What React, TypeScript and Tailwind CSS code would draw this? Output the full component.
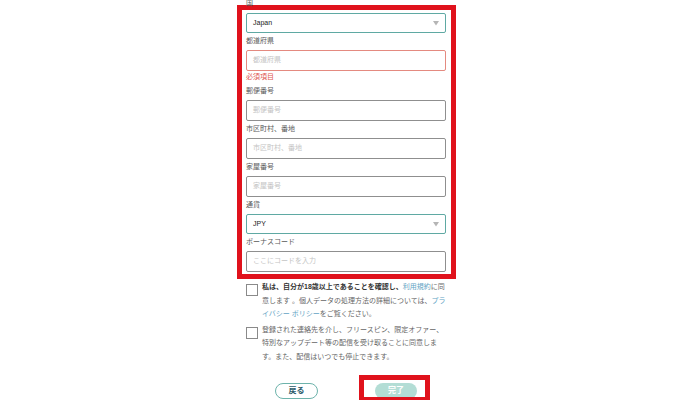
import React from "react";

const font = { fontFamily: '"Liberation Sans", "Noto Sans CJK JP", sans-serif' };

function Label({ children }: { children: React.ReactNode }) {
  return <div className="pt-[2px] pb-[3px] text-[7px] leading-[12px] text-[#5a5a5a]">{children}</div>;
}

function Arrow() {
  return (
    <svg width="6" height="5" viewBox="0 0 6 5" className="ml-auto mr-[6px]">
      <polygon points="0,0 6,0 3,4.5" fill="#b5b5b5" />
    </svg>
  );
}

function Select({ value }: { value: string }) {
  return (
    <div className="flex h-[20px] items-center rounded-[2px] border border-[#5fa9a3] bg-white pl-[6px] text-[7px] text-[#222]">
      <span>{value}</span>
      <Arrow />
    </div>
  );
}

function Input({ placeholder, error }: { placeholder: string; error?: boolean }) {
  return (
    <div
      className={`flex h-[21px] items-center rounded-[2px] border bg-white pl-[6px] text-[7px] text-[#c4c4c4] ${
        error ? "border-[#e48a80]" : "border-[#8f8f8f]"
      }`}
    >
      {placeholder}
    </div>
  );
}

function Checkbox({ children }: { children: React.ReactNode }) {
  return (
    <div className="flex">
      <div className="mt-[4px] h-[12px] w-[12px] shrink-0 border border-[#8a8a8a] bg-white" />
      <div className="ml-[4px] whitespace-nowrap text-[7px] leading-[13.5px] text-[#666]">{children}</div>
    </div>
  );
}

export default function App() {
  const link = "text-[#62a3c4]";
  return (
    <div className="h-[400px] w-[700px] overflow-hidden bg-white" style={font}>
      <div className="ml-[237px] w-[219px]">
        <div className="mt-[-3px] h-[8px] pl-[9px] text-[7px] leading-[12px] text-[#555]">国</div>
        <div className="border-[5px] border-[#e0121c] pb-[2px] pl-[4px] pr-[5px] pt-[3px]">
          <Select value="Japan" />
          <Label>都道府県</Label>
          <Input placeholder="都道府県" error />
          <div className="text-[7px] leading-[12px] text-[#e0554f]">必須項目</div>
          <Label>郵便番号</Label>
          <Input placeholder="郵便番号" />
          <Label>市区町村、番地</Label>
          <Input placeholder="市区町村、番地" />
          <Label>家屋番号</Label>
          <Input placeholder="家屋番号" />
          <Label>通貨</Label>
          <Select value="JPY" />
          <Label>ボーナスコード</Label>
          <Input placeholder="ここにコードを入力" />
        </div>
        <div className="pl-[9px] pr-[10px] pt-[1px]">
          <Checkbox>
            <span className="font-bold text-[#333]">私は、自分が18歳以上であることを確認し、</span>
            <span className={link}>利用規約</span>に同
            <br />
            意します 。個人データの処理方法の詳細については、<span className={link}>プラ</span>
            <br />
            <span className={link}>イバシー ポリシー</span>をご覧ください。
          </Checkbox>
          <div className="h-[2px]" />
          <Checkbox>
            登録された連絡先を介し、フリースピン、限定オファー、
            <br />
            特別なアップデート等の配信を受け取ることに同意しま
            <br />
            す。また、配信はいつでも停止できます。
          </Checkbox>
          <div className="mt-[12px] flex items-start">
            <div className="ml-[29px] mt-[8px] flex h-[16px] w-[43px] items-center justify-center rounded-full border border-[#6db3ab] bg-white text-[8px] font-bold text-[#2c5b6a]">
              戻る
            </div>
            <div className="ml-[41px] h-[27px] overflow-hidden border-[5px] border-[#e0121c] pl-[11px] pr-[8px] pt-[3px]">
              <div className="flex h-[16px] w-[42px] items-center justify-center rounded-full bg-[#b3ddd5] text-[8px] font-bold text-white">
                完了
              </div>
            </div>
          </div>
        </div>
      </div>
    </div>
  );
}
